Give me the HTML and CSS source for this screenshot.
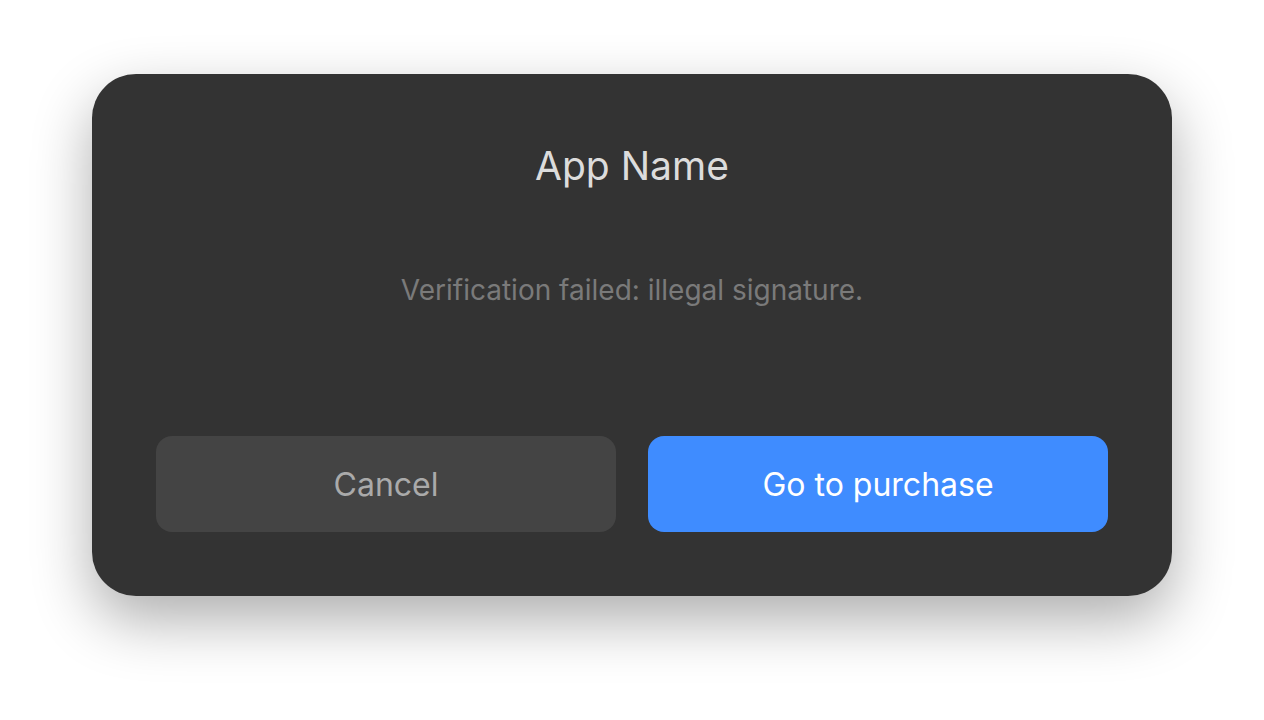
FILE: index.html
```html
<!DOCTYPE html>
<html lang="en">
<head>
<meta charset="utf-8">
<title>Dialog</title>
<link rel="stylesheet" href="styles.css">
</head>
<body>
<div class="stage">
  <div class="dialog">
    <h1 class="title">App Name</h1>
    <p class="message">Verification failed: illegal signature.</p>
    <div class="actions">
      <button class="btn btn-cancel">Cancel</button>
      <button class="btn btn-primary">Go to purchase</button>
    </div>
  </div>
</div>
</body>
</html>
```

FILE: styles.css
```css
html, body {
  margin: 0;
  padding: 0;
  background: #ffffff;
}
body {
  font-family: Inter, "Noto Sans", sans-serif;
  width: 1264px;
  height: 720px;
  overflow: hidden;
}
.stage {
  display: flex;
  justify-content: center;
  padding-top: 74px;
}
.dialog {
  width: 1080px;
  height: 522px;
  box-sizing: border-box;
  background: #333333;
  border-radius: 44px;
  box-shadow: 0 24px 60px rgba(0, 0, 0, 0.32);
  padding: 68px 64px 64px;
  display: flex;
  flex-direction: column;
  align-items: center;
}
.title {
  margin: 0;
  font-size: 39px;
  line-height: 48px;
  font-weight: 400;
  color: #dcdcdc;
}
.message {
  margin: 82px 0 0;
  font-size: 28px;
  line-height: 36px;
  color: #7a7a7a;
}
.actions {
  margin-top: auto;
  width: 100%;
  display: flex;
  gap: 32px;
}
.btn {
  flex: 1;
  height: 96px;
  border: none;
  border-radius: 16px;
  font-family: Inter, "Noto Sans", sans-serif;
  font-size: 32px;
  font-weight: 400;
  padding: 0;
}
.btn-cancel {
  background: #444444;
  color: #aaaaaa;
}
.btn-primary {
  background: #3f8cff;
  color: #ffffff;
}
```
